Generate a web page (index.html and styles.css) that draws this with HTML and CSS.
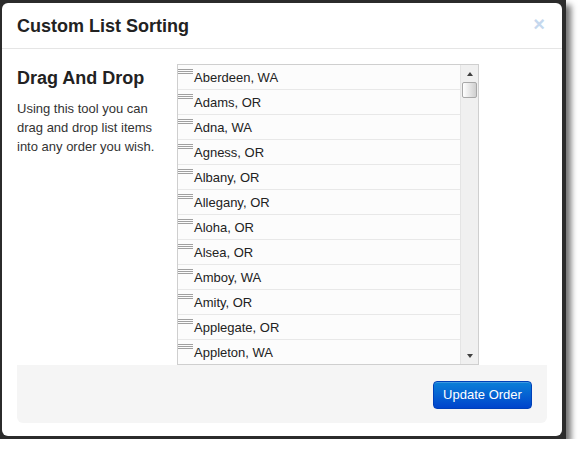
FILE: index.html
```html
<!DOCTYPE html>
<html>
<head>
<meta charset="utf-8">
<title>Custom List Sorting</title>
<link rel="stylesheet" href="styles.css">
</head>
<body>
<div class="frame">
  <div class="modal">
    <div class="modal-header">
      <h2 class="title">Custom List Sorting</h2>
      <span class="close">×</span>
    </div>
    <div class="modal-body">
      <div class="content">
        <div class="intro">
          <h3 class="intro-title">Drag And Drop</h3>
          <p class="intro-text">Using this tool you can drag and drop list items into any order you wish.</p>
        </div>
        <div class="listbox">
          <ul class="items">
            <li class="item"><span class="handle"></span><span class="label">Aberdeen, WA</span></li>
            <li class="item"><span class="handle"></span><span class="label">Adams, OR</span></li>
            <li class="item"><span class="handle"></span><span class="label">Adna, WA</span></li>
            <li class="item"><span class="handle"></span><span class="label">Agness, OR</span></li>
            <li class="item"><span class="handle"></span><span class="label">Albany, OR</span></li>
            <li class="item"><span class="handle"></span><span class="label">Allegany, OR</span></li>
            <li class="item"><span class="handle"></span><span class="label">Aloha, OR</span></li>
            <li class="item"><span class="handle"></span><span class="label">Alsea, OR</span></li>
            <li class="item"><span class="handle"></span><span class="label">Amboy, WA</span></li>
            <li class="item"><span class="handle"></span><span class="label">Amity, OR</span></li>
            <li class="item"><span class="handle"></span><span class="label">Applegate, OR</span></li>
            <li class="item"><span class="handle"></span><span class="label">Appleton, WA</span></li>
          </ul>
          <div class="scrollbar">
            <span class="arrow arrow-up"></span>
            <div class="track"><span class="thumb"></span></div>
            <span class="arrow arrow-down"></span>
          </div>
        </div>
      </div>
      <div class="modal-footer">
        <button class="btn-primary" type="button">Update Order</button>
      </div>
    </div>
  </div>
</div>
</body>
</html>
```

FILE: styles.css
```css
html, body {
  margin: 0;
  padding: 0;
  background: #ffffff;
}

body {
  font-family: "Liberation Sans", Arial, sans-serif;
  color: #333333;
}

.frame {
  box-sizing: border-box;
  width: 566px;
  height: 439px;
  padding: 3px 4px 3px 2px;
  background: #2b2b2b;
  box-shadow: 5px 5px 6px rgba(0, 0, 0, 0.55);
}

.modal {
  box-sizing: border-box;
  height: 100%;
  background: #ffffff;
  border-radius: 6px;
  display: flex;
  flex-direction: column;
}

.modal-header {
  height: 45px;
  border-bottom: 1px solid #e5e5e5;
  padding: 0 15px;
  display: flex;
  align-items: center;
  justify-content: space-between;
}

.title {
  margin: 0;
  font-size: 18px;
  font-weight: bold;
  color: #222222;
  line-height: 20px;
  padding-top: 1px;
}

.close {
  font-size: 20px;
  font-weight: bold;
  color: #c5d8ee;
  line-height: 20px;
  margin-right: 2px;
  margin-bottom: 3px;
}

.modal-body {
  flex: 1;
  padding: 15px 15px 13px;
  display: flex;
  flex-direction: column;
}

.content {
  display: flex;
  gap: 10px;
}

.intro {
  width: 150px;
}

.intro-title {
  margin: 4px 0 0;
  font-size: 18px;
  font-weight: bold;
  line-height: 20px;
  color: #222222;
}

.intro-text {
  margin: 11px 0 0;
  font-size: 13px;
  line-height: 19px;
  color: #333333;
}

.listbox {
  display: flex;
  width: 300px;
  height: 299px;
  border: 1px solid #cfcfcf;
  overflow: hidden;
}

.items {
  flex: 1;
  margin: 0;
  padding: 0;
  list-style: none;
  overflow: hidden;
}

.item {
  display: flex;
  align-items: flex-start;
  height: 24px;
  border-bottom: 1px solid #e8e8e8;
  background: #fcfcfc;
}

.handle {
  width: 16px;
  height: 5px;
  margin-top: 4px;
  flex: none;
  background:
    linear-gradient(#a0a0a0, #a0a0a0) 0 0 / 15px 1px no-repeat,
    linear-gradient(#a0a0a0, #a0a0a0) 0 2px / 15px 1px no-repeat,
    linear-gradient(#a0a0a0, #a0a0a0) 0 4px / 15px 1px no-repeat;
}

.label {
  font-size: 13px;
  line-height: 18px;
  padding-top: 4px;
  color: #222222;
}

.scrollbar {
  width: 17px;
  flex: none;
  display: flex;
  flex-direction: column;
  background: #f0f0f0;
  border-left: 1px solid #e4e4e4;
}

.arrow {
  height: 17px;
  display: flex;
  align-items: center;
  justify-content: center;
}

.arrow::before {
  content: "";
  width: 0;
  height: 0;
  border-left: 3.5px solid transparent;
  border-right: 3.5px solid transparent;
}

.arrow-up::before {
  border-bottom: 4px solid #404040;
}

.arrow-down::before {
  border-top: 4px solid #404040;
}

.track {
  flex: 1;
}

.thumb {
  display: block;
  box-sizing: border-box;
  width: 15px;
  height: 16px;
  margin-left: 1px;
  border: 1px solid #a8a8a8;
  border-radius: 2px;
  background: linear-gradient(to right, #ffffff, #e2e2e2 60%, #cfcfcf);
}

.modal-footer {
  margin-top: auto;
  height: 58px;
  background: #f5f5f5;
  border-radius: 0 0 6px 6px;
  display: flex;
  align-items: center;
  justify-content: flex-end;
  padding: 0 15px;
}

.btn-primary {
  box-sizing: border-box;
  width: 99px;
  height: 28px;
  padding: 0;
  margin-top: 1px;
  border: 1px solid #0040b8;
  border-radius: 4px;
  background: linear-gradient(#0a80d8, #0044cc);
  color: #ffffff;
  font-family: "Liberation Sans", Arial, sans-serif;
  font-size: 13px;
  box-shadow: inset 0 1px 0 rgba(255, 255, 255, 0.2);
}
```
